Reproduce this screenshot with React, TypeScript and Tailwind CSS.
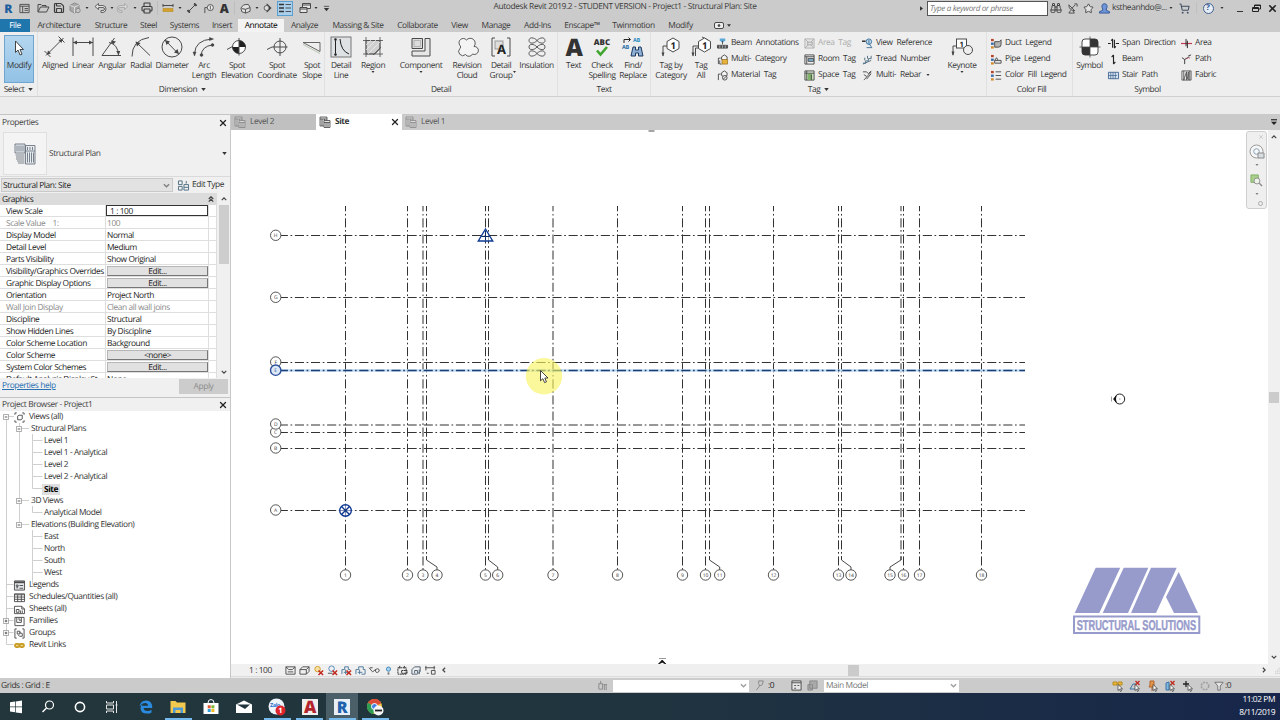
import type { ReactNode } from "react";
import clsx from "clsx";
import { Binoculars, Printer, Save, ShoppingCart, Star, X } from "lucide-react";

type IconProps = { children: ReactNode; className?: string; box?: string };

function Icon({ children, className = "size-3", box = "0 0 12 12" }: IconProps) {
  return (
    <svg
      viewBox={box}
      className={clsx("shrink-0 overflow-visible", className)}
      fill="none"
      stroke="#4a4a4a"
      strokeWidth={1}
    >
      {children}
    </svg>
  );
}

function Caret({ className }: { className?: string }) {
  return (
    <svg viewBox="0 0 6 4" className={clsx("h-[3px] w-[5px] shrink-0", className)}>
      <path d="M0 0h6L3 4z" fill="#333" />
    </svg>
  );
}

/* ---------- title bar ---------- */

function Slot({ w, children }: { w: string; children?: ReactNode }) {
  return <div className={clsx("flex shrink-0 items-center justify-center", w)}>{children}</div>;
}

function QuickAccess() {
  return (
    <div className="flex h-4 w-[334px] shrink-0 items-center">
      <Slot w="w-4">
        <span className="text-[12px] leading-[17px] font-extrabold text-[#1f5f9e]">R</span>
      </Slot>
      <Slot w="w-4">
        <Icon className="size-[11px]">
          <path d="M1 1.500h10v9H1zM1 3.500h10M4 3.500v7M6 6h4M6 8h4" />
        </Icon>
      </Slot>
      <Slot w="w-[19px] pl-[3px]">
        <Icon>
          <path d="M1 10V2.500h3l1 1h4V5M1 10l2.500-5H12L9.500 10z" />
        </Icon>
      </Slot>
      <Slot w="w-4">
        <Save size={12} color="#3c3c3c" strokeWidth={2.4} />
      </Slot>
      <Slot w="w-4">
        <Icon>
          <path d="M1 3.500 5.500 1 10 3v5L5.500 11 1 8.500z" fill="#a9a9a9" stroke="#8a8a8a" />
          <path d="M5.500 5v6M1 3.500 5.500 5 10 3" stroke="#eee" strokeWidth=".7" />
          <circle cx="9" cy="8.500" r="2.200" fill="#c9c9c9" stroke="#8a8a8a" />
        </Icon>
      </Slot>
      <Slot w="w-2">
        <Caret className="h-0.5! w-1!" />
      </Slot>
      <Slot w="w-[17px]">
        <Icon>
          <path d="M4.500 1.500 1 4.500l3.500 3v-2H9q1.500 0 1.500 1.500T9 8.500H7v2h2q3-.5 3-3.500T9 3.500H4.500z" strokeWidth=".8" fill="#e4e4e4" />
        </Icon>
      </Slot>
      <Slot w="w-[7px]">
        <Caret className="h-0.5! w-1!" />
      </Slot>
      <Slot w="w-4">
        <Icon>
          <path d="M7.500 1.500 11 4.500l-3.500 3v-2H3Q1.500 5.500 1.500 7T3 8.500h2v2H3Q0 10 0 7t3-3.500h4.500z" strokeWidth=".7" stroke="#9c9c9c" fill="#d6d6d6" />
        </Icon>
      </Slot>
      <Slot w="w-2">
        <Caret className="h-0.5! w-1!" />
      </Slot>
      <Slot w="w-4">
        <Printer size={12} color="#3c3c3c" strokeWidth={2.2} />
      </Slot>
      <Slot w="w-[5px]">
        <div className="h-3.5 w-px bg-[#bdbdbd]" />
      </Slot>
      <Slot w="w-4">
        <Icon>
          <path d="M1 3.500h10M1 2v3M11 2v3" />
          <path d="M1 6.500h10v3H1z" fill="#d4a22c" stroke="#b98a1c" strokeWidth=".6" />
        </Icon>
      </Slot>
      <Slot w="w-[7px]">
        <Caret className="h-0.5! w-1!" />
      </Slot>
      <Slot w="w-[17px]">
        <Icon>
          <path d="M2.500 9.500l7-7M1 8l3 3M8 1l3 3" />
          <circle cx="2.800" cy="9.200" r="1" fill="#444" />
          <circle cx="9.200" cy="2.800" r="1" fill="#444" />
        </Icon>
      </Slot>
      <Slot w="w-4">
        <Icon className="size-[11px]">
          <circle cx="8" cy="5" r="3.300" fill="#eee" />
          <path d="M4.500 5H2v6M8 3v4" />
        </Icon>
      </Slot>
      <Slot w="w-4">
        <span className="text-[12.500px] leading-[17px] font-extrabold text-[#333]">A</span>
      </Slot>
      <Slot w="w-[5px]">
        <div className="h-3.5 w-px bg-[#bdbdbd]" />
      </Slot>
      <Slot w="w-4">
        <Icon className="size-[11px]">
          <path d="M1 5.500 4 2l5-.5L11 5v4l-5 2-4-1.500zM2 6l4 1 5-2M6 7v4" fill="#e2e2e2" />
        </Icon>
      </Slot>
      <Slot w="w-[7px]">
        <Caret className="h-0.5! w-1!" />
      </Slot>
      <Slot w="w-3.5">
        <Icon className="size-[10px]">
          <path d="M6 1 11 6l-5 5z" fill="#333" />
          <circle cx="5.500" cy="6" r="3" fill="#ddd" />
        </Icon>
      </Slot>
      <div className="ml-[3px] flex h-[15px] w-4 shrink-0 items-center justify-center border border-[#5a9fd0] bg-[#a9cfeb]">
        <Icon>
          <path d="M0 2.500h5M0 6h5M0 9.500h5" strokeWidth="1.500" stroke="#333" />
          <path d="M6.500 2.500H12M6.500 6H12M6.500 9.500H12" strokeWidth=".8" stroke="#333" />
        </Icon>
      </div>
      <Slot w="w-5 pl-1">
        <Icon>
          <path d="M3.500 1.500h8v5h-8zM3.500 3h8" fill="#e6e6e6" />
          <path d="M1 5.500h7v5H1zM1 7h7" fill="#e6e6e6" />
        </Icon>
      </Slot>
      <Slot w="w-1.5">
        <Caret className="h-0.5! w-1!" />
      </Slot>
      <Slot w="w-3.5">
        <Icon className="size-[7px]" box="0 0 8 8">
          <path d="M1 1.500h6" />
          <path d="M1 3.500h6L4 7z" fill="#333" stroke="none" />
        </Icon>
      </Slot>
    </div>
  );
}

function TitleBar() {
  return (
    <header className="flex h-[19px] items-start bg-[#cbcbcb]">
      <QuickAccess />
      <div className="h-[15px] w-[582px] shrink-0 text-center leading-[14px] tracking-[-0.36px] text-[#3c3c3c]">
        Autodesk Revit 2019.2 - STUDENT VERSION - Project1 - Structural Plan: Site
      </div>
      <div className="flex h-4 flex-1 items-center">
        <Slot w="w-[11px]">
          <svg viewBox="0 0 4 6" className="h-[5px] w-[3px]">
            <path d="M0 0v6l4-3z" fill="#333" />
          </svg>
        </Slot>
        <div className="mt-px h-[15px] w-[121px] shrink-0 border border-[#555] bg-white pl-0.5 text-[8px] leading-[13px] tracking-[-0.33px] text-[#777] italic">
          Type a keyword or phrase
        </div>
        <Slot w="w-4">
          <Binoculars size={12} color="#444" strokeWidth={2} />
        </Slot>
        <Slot w="w-4">
          <Icon className="size-[11px]">
            <path d="M2 2q0 6 6.500 6.500zM5 6l4-4M4 8l-2 3h6L6.500 8.500M8 1h3v3" />
          </Icon>
        </Slot>
        <Slot w="w-4">
          <Star size={11} color="#444" strokeWidth={2} fill="#e4e4e4" />
        </Slot>
        <Slot w="w-4">
          <Icon className="size-[11px]">
            <path d="M.5 11V9.500L4 8V6.500Q3 5 3.200 3 4 .7 6 .7T8.800 3Q9 5 8 6.500V8l3.500 1.500V11z" fill="#6f95d8" stroke="#2e5596" />
          </Icon>
        </Slot>
        <span className="w-[55px] shrink-0 whitespace-nowrap text-[#3c3c3c]">kstheanhdo@...</span>
        <Slot w="w-1.5 pl-px">
          <Caret className="h-0.5! w-1!" />
        </Slot>
        <Slot w="w-[23px]">
          <ShoppingCart size={11} color="#3f4d63" strokeWidth={2.2} />
        </Slot>
        <div className="h-3 w-px bg-[#c0c0c0]" />
        <Slot w="w-[22px]">
          <div className="flex size-[11px] items-center justify-center rounded-full border border-[#41608d] bg-[#e7edf5] text-[8px] leading-none font-bold tracking-normal text-[#2f5590]">
            ?
          </div>
        </Slot>
        <Slot w="w-1.5">
          <Caret className="h-0.5! w-1!" />
        </Slot>
        <Slot w="w-6 pl-1.5">
          <div className="mt-[7px] h-[1.500px] w-1.5 bg-[#333]" />
        </Slot>
        <Slot w="w-3.5">
          <Icon className="size-[9px]" box="0 0 9 9">
            <path d="M2.500 3V1h6v4H6.500M.5 3.500h6v4h-6zM.5 4.500h6M2.500 1.500h6" stroke="#222" />
          </Icon>
        </Slot>
        <Slot w="w-[18px]">
          <X size={11} color="#222" strokeWidth={3.5} />
        </Slot>
      </div>
    </header>
  );
}

const RIBBON_TABS = [
  { label: "Architecture", w: "w-[58px]" },
  { label: "Structure", w: "w-[46px]" },
  { label: "Steel", w: "w-[29px]" },
  { label: "Systems", w: "w-[43px]" },
  { label: "Insert", w: "w-8" },
  { label: "Annotate", w: "w-[46px]" },
  { label: "Analyze", w: "w-[41px]" },
  { label: "Massing & Site", w: "w-[66px]" },
  { label: "Collaborate", w: "w-[53px]" },
  { label: "View", w: "w-[31px]" },
  { label: "Manage", w: "w-[42px]" },
  { label: "Add-Ins", w: "w-[41px]" },
  { label: "Enscape™", w: "w-12" },
  { label: "Twinmotion", w: "w-[55px]" },
  { label: "Modify", w: "w-[39px]" },
];

function RibbonTabs() {
  return (
    <nav className="flex h-[13px] bg-[#cbcbcb] text-[#3a3a3a]">
      <div className="w-[30px] bg-[#1f76ad] text-center leading-[14px] text-white">File</div>
      {RIBBON_TABS.map((tab) => (
        <div
          key={tab.label}
          className={clsx(
            "text-center leading-[14px] whitespace-nowrap",
            tab.w,
            tab.label === "Annotate" && "bg-[#f3f3f3] text-black",
          )}
        >
          {tab.label}
        </div>
      ))}
      <div className="flex items-center gap-[3px] pl-3.5">
        <Icon className="h-[7px] w-2.5" box="0 0 10 7">
          <rect x=".5" y=".5" width="9" height="6" rx="1.500" fill="#eee" />
          <circle cx="5" cy="3.500" r=".9" fill="#333" />
        </Icon>
        <Caret className="w-1!" />
      </div>
    </nav>
  );
}

/* ---------- ribbon ---------- */

type ToolProps = { lines: string[]; w: string; drop?: boolean; children: ReactNode };

function Tool({ lines, w, drop, children }: ToolProps) {
  return (
    <div className={clsx("flex shrink-0 flex-col items-center pt-[3px] whitespace-nowrap", w)}>
      <Icon className="mb-px size-6" box="0 0 24 24">
        {children}
      </Icon>
      {lines.map((line) => (
        <span key={line} className="h-[10px] leading-[12px]">
          {line}
        </span>
      ))}
      {drop && <Caret className="mt-px h-0.5! w-1!" />}
    </div>
  );
}

function Panel({ w, title, arrow, children }: { w: string; title: string; arrow?: boolean; children: ReactNode }) {
  return (
    <section className={clsx("flex shrink-0 flex-col border-r border-[#e0e0e0]", w)}>
      <div className="flex h-[51px]">{children}</div>
      <div className="flex h-[13px] items-center justify-center gap-1 leading-[13px]">
        {title}
        {arrow && <Caret />}
      </div>
    </section>
  );
}

type RowItem = { label: string; icon: ReactNode; off?: boolean; drop?: boolean };

function ToolRows({ w, items }: { w: string; items: RowItem[] }) {
  return (
    <div className={clsx("flex shrink-0 flex-col pt-[3px]", w)}>
      {items.map((item) => (
        <div
          key={item.label}
          className={clsx(
            "flex h-4 items-center gap-[3px] leading-4 whitespace-nowrap [word-spacing:2px]",
            item.off && "text-[#acacac]",
          )}
        >
          <Icon className="size-[11px]">{item.icon}</Icon>
          {item.label}
          {item.drop && <Caret className="ml-0.5 h-0.5! w-1!" />}
        </div>
      ))}
    </div>
  );
}

const HEX_TAG = (
  <>
    <path d="M4 11h6M4 11v10" />
    <path d="M2.500 17.500h3L4 21.500z" fill="#444" stroke="none" />
  </>
);

const MINI_TAG = <path d="M1.500 11V4.500H4M8 1l3 2v3l-3 1.500L5 6V3z" fill="#f4f4f4" />;

const TAG_COL_1: RowItem[] = [
  {
    label: "Beam Annotations",
    icon: (
      <>
        <path d="M3 .5h6v2L6 5.500 3 2.500z" fill="#5aa7d8" stroke="none" />
        <path d="M6 3v4" />
        <path d="M.5 8h11v3H.5z" fill="#555" />
        <path d="M3 8v3M6 8v3M9 8v3" stroke="#fff" strokeWidth=".5" />
      </>
    ),
  },
  {
    label: "Multi- Category",
    icon: (
      <>
        {MINI_TAG}
        <path d="M5.500 6h6v5h-6z" fill="#e8b23c" stroke="#8a6412" strokeWidth=".7" />
        <path d="M3 7v4h2" />
      </>
    ),
  },
  {
    label: "Material Tag",
    icon: (
      <>
        {MINI_TAG}
        <circle cx="8.500" cy="8.500" r="2.500" fill="#eee" />
        <path d="M7 10l3-3" />
      </>
    ),
  },
];

const TAG_COL_2: RowItem[] = [
  {
    label: "Area Tag",
    off: true,
    icon: (
      <>
        <path d="M1 1h10v10H1zM1 1l10 10M11 1 1 11" stroke="#b0b0b0" fill="#e4e4e4" />
        <path d="M4 4.500h5v3H4z" stroke="#a6a6a6" fill="#ddd" />
      </>
    ),
  },
  {
    label: "Room Tag",
    icon: (
      <>
        <path d="M1 1h10v10H1zM1 3h10M3 3v8" />
        <path d="M4.500 5h6v3h-6z" fill="#7eb3d5" />
      </>
    ),
  },
  {
    label: "Space Tag",
    icon: (
      <>
        <path d="M1 1h10v10H1z" fill="#d6e7cf" />
        <path d="M4 4h5v7H4z" fill="#7fb46a" stroke="none" />
        <path d="M3 1v10M1 3.500h10M8 5v6" />
      </>
    ),
  },
];

const TAG_COL_3: RowItem[] = [
  {
    label: "View Reference",
    icon: (
      <>
        <path d="M0 3.500h4" stroke="#222" strokeWidth="1.500" />
        <circle cx="7.500" cy="4" r="3" fill="#b9d7ec" stroke="#3d7199" />
        <path d="M5 10.500h6M7.500 2v4l3 4" stroke="#3d7199" />
      </>
    ),
  },
  { label: "Tread Number", icon: <path d="M1 10h3V7.500h3V5h3V2M3 4v3M6 2v3M1 11l9-4" stroke="#4c6a80" /> },
  { label: "Multi- Rebar", drop: true, icon: <path d="M1 2h4l2 2 3-3M3 10l7-8M2 5l3 2M3 10l-1 1M5 10l5-6" /> },
];

const swatches = (
  <>
    <path d="M0 1h3v2.500H0z" fill="#b8432c" stroke="none" />
    <path d="M0 5h3v2.500H0z" fill="#3c6ca8" stroke="none" />
    <path d="M0 9h3v2.500H0z" fill="#d08a2c" stroke="none" />
  </>
);

const LEGENDS: RowItem[] = [
  {
    label: "Duct Legend",
    icon: (
      <>
        {swatches}
        <path d="M4 4h5l2-2v5q0 3-3 3H4z" fill="#b5b5b5" />
      </>
    ),
  },
  {
    label: "Pipe Legend",
    icon: (
      <>
        {swatches}
        <path d="M4 10V7l2-3 2 3h3v3zM4 7h4" fill="#e4e4e4" />
      </>
    ),
  },
  {
    label: "Color Fill Legend",
    icon: (
      <>
        {swatches}
        <path d="M5 2h6M5 6h6M5 10h6" />
      </>
    ),
  },
];

const SYMBOLS_1: RowItem[] = [
  { label: "Span Direction", icon: <path d="M5 1v9.500M7 2v9M5 1 3.500 3M7 11l1.500-2M0 6h3M8.500 6H12" stroke="#222" strokeWidth="1.200" /> },
  { label: "Beam", icon: <path d="M6 1v10M6 1 4 3.500M6 11l2-2.500" stroke="#222" strokeWidth="1.200" /> },
  {
    label: "Stair Path",
    icon: (
      <>
        <path d="M.5 2.500h11v7H.5z" fill="#d5e3f2" stroke="#41658f" />
        <path d="M3 2.500v7M5.500 2.500v7M8 2.500v7M1 6h9" stroke="#41658f" strokeWidth=".8" />
      </>
    ),
  },
];

const SYMBOLS_2: RowItem[] = [
  {
    label: "Area",
    icon: (
      <>
        <path d="M0 6h12" stroke="#c6394f" strokeWidth="1.300" />
        <path d="M5.500 1v8M7 3v8" stroke="#222" />
      </>
    ),
  },
  {
    label: "Path",
    icon: (
      <>
        <path d="M4 11V6L1 4M4 6l5-3M8 2l3-1" stroke="#333" />
        <path d="M5 5l6-1" stroke="#c6394f" strokeDasharray="1 1" />
      </>
    ),
  },
  { label: "Fabric", icon: <path d="M1 1h10v10H1zM3 1v10l3-9v9M8 11V2l-1 8M9.500 1v10" strokeWidth=".9" /> },
];

function Ribbon() {
  return (
    <div className="flex h-[65px] border-b border-[#d0d0d0] bg-[#eeeeee] text-[#383838]">
      <Panel w="w-[38px]" title="Select" arrow>
        <div className="mt-[3px] ml-1 flex h-12 w-[30px] flex-col items-center border border-[#6ea6cf] bg-linear-to-b from-[#b4d6ef] to-[#92c2e6]">
          <Icon className="mt-0.5 size-5" box="0 0 20 20">
            <path d="M6.500 3v11.500L9 12l2 5 2-.8-2-4.700h3.500z" fill="#fff" stroke="#444" />
          </Icon>
          <span className="mt-0.5 leading-[12px]">Modify</span>
        </div>
      </Panel>

      <Panel w="w-[287px] pl-[3px]" title="Dimension" arrow>
        <Tool w="w-7" lines={["Aligned"]}>
          <path d="M3 20.500 20.500 3M1.500 16l6 6M15.500 1.500l6 6" />
          <path d="M4 19.500l1-4 3 3zM19.500 4l-4 1 3 3z" fill="#444" stroke="none" />
        </Tool>
        <Tool w="w-7" lines={["Linear"]}>
          <path d="M2 2.500V21M22 2.500V21M2 7.500h20" />
          <path d="M2 7.500l4-2v4zM22 7.500l-4-2v4z" fill="#444" stroke="none" />
        </Tool>
        <Tool w="w-[30px]" lines={["Angular"]}>
          <path d="M2 20.500h19M2 20.500 14.500 3M9 7.500Q18 9 18.500 20.500" />
          <path d="M11 5.500l5 1-3 3zM18.700 20l-2.500-4h4z" fill="#444" stroke="none" />
        </Tool>
        <Tool w="w-7" lines={["Radial"]}>
          <path d="M3 21.500Q3 5 20 2.500M7 7l14 13.500" />
          <path d="M6.500 6.500l5 1.500-3.500 3.500z" fill="#444" stroke="none" />
        </Tool>
        <Tool w="w-[34px]" lines={["Diameter"]}>
          <circle cx="12" cy="12" r="10" />
          <path d="M5.500 5.500 18 18.500" />
          <path d="M5 5l5 1.500-3.500 3.500zM19 19l-5-1.500 3.500-3.500z" fill="#444" stroke="none" />
        </Tool>
        <Tool w="w-[30px]" lines={["Arc", "Length"]}>
          <path d="M2.500 19Q3 5 20 4M9 20.500Q10 11 20.500 10" />
          <path d="M2.500 21l-1.500-4h3zM21.500 4l-4-1.500v3z" fill="#444" stroke="#444" strokeWidth=".5" />
          <circle cx="9.500" cy="20" r="1.300" fill="#444" />
          <circle cx="20.500" cy="10" r="1.300" fill="#444" />
        </Tool>
        <Tool w="w-9" lines={["Spot", "Elevation"]}>
          <circle cx="14" cy="12" r="6.500" fill="#fff" />
          <path d="M14 5.500V12h6.500A6.500 6.500 0 0 0 14 5.500zM14 18.500V12H7.500A6.500 6.500 0 0 0 14 18.500z" fill="#222" stroke="none" />
          <path d="M2 14.500l5.500-3M14 3v17.500" />
        </Tool>
        <Tool w="w-11" lines={["Spot", "Coordinate"]}>
          <circle cx="15" cy="12" r="6" />
          <path d="M2 14.500 7 12h15.500M15 3v18" />
        </Tool>
        <Tool w="w-[26px]" lines={["Spot", "Slope"]}>
          <path d="M3 7.500h17v9z" stroke="#666" />
          <path d="M3 9.500l17 9" stroke="#b9c8b4" />
        </Tool>
      </Panel>

      <Panel w="w-[233px]" title="Detail">
        <Tool w="w-8" lines={["Detail", "Line"]}>
          <rect x="2" y="2" width="20" height="20" fill="#dfe2e4" stroke="#777" />
          <path d="M6.500 5v14M11 4q1 12 9 15" stroke="#222" />
          <circle cx="6.500" cy="4.500" r="1" fill="#222" />
          <circle cx="6.500" cy="19.500" r="1" fill="#222" />
        </Tool>
        <Tool w="w-8" lines={["Region"]} drop>
          <path d="M5 5.500h14V14l-5 5H5z" fill="#cfcfcf" stroke="#777" />
          <path d="M5 2v20M19 2v20M2 5.500h20M2 19h20M12 20l8-8" strokeWidth=".8" />
          <path d="M5 10l5-5M5 15 15 5M7 19 19 7" stroke="#f2f2f2" strokeWidth=".7" />
        </Tool>
        <div className="w-2 shrink-0" />
        <Tool w="w-12" lines={["Component"]} drop>
          <path d="M3 3.500h10.500v10H3z" fill="#dcdcdc" />
          <path d="M16 3.500h5V21H3v-5h13z" fill="#e6e6e6" />
          <path d="M5 5.500h6.500v6H5z" strokeWidth=".6" stroke="#999" />
        </Tool>
        <Tool w="w-11" lines={["Revision", "Cloud"]}>
          <path
            d="M5 10.500A4 4 0 1 1 11.500 5 4.500 4.500 0 1 1 19 11.500 4 4 0 1 1 17.500 19 4 4 0 0 1 10.500 19.500 4 4 0 1 1 5 13.500Q6.500 12 5 10.500z"
            fill="#f4f4f4"
            strokeWidth=".9"
          />
        </Tool>
        <Tool w="w-6" lines={["Detail", "Group"]}>
          <path d="M6 3H3v18h3M18 3h3v18h-3" />
          <rect x="6" y="6" width="8" height="8" fill="#ddd" stroke="#999" />
          <text x="8" y="18.500" fontSize="13" fontWeight="700" fill="#222" stroke="none">
            A
          </text>
        </Tool>
        <div className="flex w-[3px] items-end pb-2.5">
          <Caret className="h-0.5! w-[3px]!" />
        </div>
        <Tool w="w-[41px]" lines={["Insulation"]}>
          <path
            d="M12 5.500C9 2 4 2 4 5.500S9 9 12 5.500 20 2 20 5.500 15 9 12 5.500zM12 12C9 8.500 4 8.500 4 12s5 3.500 8 0 8-3.500 8 0-5 3.500-8 0zM12 18.500C9 15 4 15 4 18.500s5 3.500 8 0 8-3.500 8 0-5 3.500-8 0z"
            strokeWidth=".9"
          />
        </Tool>
      </Panel>

      <Panel w="w-[93px]" title="Text">
        <Tool w="w-[31px]" lines={["Text"]}>
          <text x="12" y="21" textAnchor="middle" fontSize="24" fontWeight="800" fill="#333" stroke="none">
            A
          </text>
        </Tool>
        <Tool w="w-[26px]" lines={["Check", "Spelling"]}>
          <text x="12" y="10" textAnchor="middle" fontSize="8" fontWeight="800" letterSpacing="0" fill="#333" stroke="none">
            ABC
          </text>
          <path d="M7 15.500l3.500 4L17 12" stroke="#3fa52c" strokeWidth="2.600" />
        </Tool>
        <Tool w="w-9" lines={["Find/", "Replace"]}>
          <text x="1" y="14" fontSize="5.500" fontWeight="700" fill="#2d6fa8" stroke="none">
            AB
          </text>
          <text x="12" y="7" fontSize="5.500" fontWeight="700" fill="#2d8bc0" stroke="none">
            AB
          </text>
          <path d="M3 8V4.500h6M7.500 2.500l2 2-2 2" stroke="#222" />
          <path d="M12 12h2.500v3h3v-3H20l2 9h-4.500v-3h-3v3H10z" fill="#8fb0d6" stroke="#1f3a5f" />
        </Tool>
      </Panel>

      <Panel w="w-[336px]" title="Tag" arrow>
        <Tool w="w-10" lines={["Tag by", "Category"]}>
          {HEX_TAG}
          <path d="M14 3l6 3.500v7L14 17l-6-3.500v-7z" fill="#fff" />
          <text x="14" y="13.500" textAnchor="middle" fontSize="9.500" fontWeight="700" fill="#222" stroke="none">
            1
          </text>
        </Tool>
        <Tool w="w-5" lines={["Tag", "All"]}>
          {HEX_TAG}
          <path d="M6.500 21V13H10M13 2l6 3" />
          <path d="M15.500 3l6 3.500v7l-6 3.500-6-3.500v-7z" fill="#fff" />
          <text x="15.500" y="13.500" textAnchor="middle" fontSize="9.500" fontWeight="700" fill="#222" stroke="none">
            1
          </text>
        </Tool>
        <div className="w-[6px] shrink-0" />
        <ToolRows w="w-[87px]" items={TAG_COL_1} />
        <ToolRows w="w-[58px]" items={TAG_COL_2} />
        <ToolRows w="w-[75px]" items={TAG_COL_3} />
        <div className="mt-[3px] h-12 w-px bg-[#d6d6d6]" />
        <Tool w="w-[50px]" lines={["Keynote"]} drop>
          <path d="M3 11h3M3 11v9" />
          <path d="M1.500 16.500h3L3 21z" fill="#444" stroke="none" />
          <rect x="6.500" y="4" width="10" height="9" fill="#fff" />
          <circle cx="18" cy="15" r="4.500" fill="#eee" />
          <text x="11.500" y="11.500" textAnchor="middle" fontSize="7.500" fontWeight="700" fill="#222" stroke="none">
            1
          </text>
        </Tool>
      </Panel>

      <Panel w="w-[86px] pl-1" title="Color Fill">
        <ToolRows w="w-20" items={LEGENDS} />
      </Panel>

      <section className="flex w-[149px] shrink-0 flex-col">
        <div className="flex h-[51px]">
          <Tool w="w-[33px]" lines={["Symbol"]}>
            <rect x="4" y="4" width="16" height="16" rx="3" fill="#fff" />
            <path d="M12 4h5q3 0 3 3v5h-8zM4 12h8v8H7q-3 0-3-3z" fill="#333" stroke="none" />
            <path d="M12 1.500v21M1.500 12h21" strokeWidth=".8" />
          </Tool>
          <div className="w-0.5" />
          <ToolRows w="w-[73px]" items={SYMBOLS_1} />
          <ToolRows w="w-10" items={SYMBOLS_2} />
        </div>
        <div className="h-[13px] text-center leading-[13px]">Symbol</div>
      </section>
    </div>
  );
}

/* ---------- properties ---------- */

function PanelTitle({ children }: { children: ReactNode }) {
  return (
    <div className="flex items-center justify-between bg-[#f0f0f0] pr-0.5 pl-0.5 text-[#444]">
      <span>{children}</span>
      <X size={10} color="#222" strokeWidth={3} />
    </div>
  );
}

type Prop = { name: string; value: string; kind?: "edit" | "off" | "focus" };

const PROPS: Prop[] = [
  { name: "View Scale", value: "1 : 100", kind: "focus" },
  { name: "Scale Value    1:", value: "100", kind: "off" },
  { name: "Display Model", value: "Normal" },
  { name: "Detail Level", value: "Medium" },
  { name: "Parts Visibility", value: "Show Original" },
  { name: "Visibility/Graphics Overrides", value: "Edit...", kind: "edit" },
  { name: "Graphic Display Options", value: "Edit...", kind: "edit" },
  { name: "Orientation", value: "Project North" },
  { name: "Wall Join Display", value: "Clean all wall joins", kind: "off" },
  { name: "Discipline", value: "Structural" },
  { name: "Show Hidden Lines", value: "By Discipline" },
  { name: "Color Scheme Location", value: "Background" },
  { name: "Color Scheme", value: "<none>", kind: "edit" },
  { name: "System Color Schemes", value: "Edit...", kind: "edit" },
  { name: "Default Analysis Display St...", value: "None" },
];

function PropertyRow({ prop }: { prop: Prop }) {
  return (
    <div
      className={clsx(
        "flex h-3 border-b border-[#dedede] leading-[13px] whitespace-pre",
        prop.kind === "off" ? "text-[#8a8a8a]" : "text-[#1c1c1c]",
      )}
    >
      <div className="h-[13px] w-[105px] shrink-0 pl-1.5">{prop.name}</div>
      <div className="h-[13px] w-[104px] shrink-0 border-x border-[#dedede]">
        {prop.kind === "edit" && (
          <div className="mt-px ml-px h-[10px] border border-[#b5b5b5] border-b-[#777] border-r-[#777] bg-[#e1e1e1] text-center leading-[10px]">
            {prop.value}
          </div>
        )}
        {prop.kind === "focus" && (
          <div className="h-[11px] border border-[#333] bg-white pl-[3px] leading-[11px]">{prop.value}</div>
        )}
        {prop.kind !== "edit" && prop.kind !== "focus" && <span className="pl-px">{prop.value}</span>}
      </div>
      <div className="w-2 border-r border-[#dedede]" />
    </div>
  );
}

function Chevron({ d, className }: { d: string; className?: string }) {
  return (
    <svg viewBox="0 0 8 8" className={clsx("size-[7px] shrink-0", className)} fill="none" stroke="#444" strokeWidth="1.600">
      <path d={d} />
    </svg>
  );
}

function Properties() {
  return (
    <div className="flex h-[284px] flex-col border-b border-[#c4c4c4] bg-[#f0f0f0]">
      <div className="grid h-[17px] shrink-0 border-t border-[#c4c4c4]">
        <PanelTitle>Properties</PanelTitle>
      </div>
      <div className="flex h-[46px] shrink-0 items-center border-b border-[#dadada]">
        <div className="ml-[3px] flex h-[43px] w-11 items-center justify-center border border-[#dfdfdf] bg-[#f4f4f4]">
          <svg viewBox="0 0 22 22" className="size-[22px]" fill="none" stroke="#5c6672" strokeWidth=".8">
            <path d="M1 1h10v9H1zM11.500 2.500h9.500v18.500h-9.500z" fill="#e6ebf0" />
            <path d="M3 2.500v6M5 2.500v6M7 2.500v6M9 2.500v6M11.500 8h9.500M13.500 9.500v10M15.500 9.500v10M17.500 9.500v10M19.500 9.500v10M13.500 4v3M16 4v3M18.500 4v3" />
            <path d="M1.500 12h9M2 14h8.500M2 16h8.500M3 18h7.500M4 20h6.500" />
          </svg>
        </div>
        <span className="flex-1 pl-0.5 text-[#444]">Structural Plan</span>
        <Caret className="mr-[3px]" />
      </div>
      <div className="flex h-4 shrink-0 items-center">
        <div className="ml-px flex h-[14px] w-[172px] items-center justify-between border border-[#c9c9c9] bg-[#e2e2e2] pr-0.5 pl-px leading-[13px] text-[#222]">
          Structural Plan: Site
          <Chevron d="M1 2.500l3 3 3-3" className="opacity-60" />
        </div>
        <Icon className="mr-[3px] ml-[5px] size-[11px]">
          <path d="M.5 1h4v4h-4zM.5 7h4v4h-4zM6.500 5h5v6h-5zM6.500 8h5M9 1v3" stroke="#4a6a80" />
        </Icon>
        <span className="text-[#333]">Edit Type</span>
      </div>
      <div className="flex min-h-0 flex-1">
        <div className="flex w-[217px] flex-col overflow-hidden bg-white">
          <div className="flex h-3 shrink-0 items-center justify-between bg-[#dcdcdc] pr-[3px] pl-0.5 leading-[13px] text-[#222]">
            Graphics
            <Chevron d="M1 4l3-3 3 3M1 7.500l3-3 3 3" className="size-[6px]!" />
          </div>
          <div className="h-[173px] shrink-0 overflow-hidden">
            {PROPS.map((p) => (
              <PropertyRow key={p.name} prop={p} />
            ))}
          </div>
        </div>
        <div className="flex h-[185px] w-[13px] flex-col items-center justify-between bg-[#f0f0f0] py-[3px]">
          <Chevron d="M1 5.500l3-3 3 3" className="size-[6px]!" />
          <div className="-mt-[103px] h-[59px] w-[10px] bg-[#cdcdcd]" />
          <Chevron d="M1 2.500l3 3 3-3" className="size-[6px]!" />
        </div>
      </div>
      <div className="flex h-[19px] shrink-0 items-start justify-between pt-px pr-0.5 pl-0.5">
        <span className="leading-[14px] text-[#2a6fb0] underline">Properties help</span>
        <div className="h-[15px] w-[49px] bg-[#cccccc] text-center leading-[15px] text-[#8b8b8b]">Apply</div>
      </div>
    </div>
  );
}

/* ---------- project browser ---------- */

type TreeItem = { label: string; level: number; box?: "+" | "-"; icon?: ReactNode; active?: boolean };

const TREE: TreeItem[] = [
  {
    label: "Views (all)",
    level: 0,
    box: "-",
    icon: <path d="M3 1H1v2M9 1h2v2M3 11H1V9M9 11h2V9M4 4.500l1.500-1H9v4L7.500 8.500H4z" />,
  },
  { label: "Structural Plans", level: 1, box: "-" },
  { label: "Level 1", level: 2 },
  { label: "Level 1 - Analytical", level: 2 },
  { label: "Level 2", level: 2 },
  { label: "Level 2 - Analytical", level: 2 },
  { label: "Site", level: 2, active: true },
  { label: "3D Views", level: 1, box: "-" },
  { label: "Analytical Model", level: 2 },
  { label: "Elevations (Building Elevation)", level: 1, box: "-" },
  { label: "East", level: 2 },
  { label: "North", level: 2 },
  { label: "South", level: 2 },
  { label: "West", level: 2 },
  {
    label: "Legends",
    level: 0,
    icon: (
      <>
        <path d="M.5 1h11v10H.5z" fill="#e3e6ea" />
        <path d="M.5 2.500h11" strokeWidth="2" />
        <path d="M2.500 5.500h2v1.500h-2zM2.500 8.500h2M6 6h4M6 9h4" />
      </>
    ),
  },
  { label: "Schedules/Quantities (all)", level: 0, icon: <path d="M.5 2h11v8.500H.5zM.5 3h11M.5 5.500h11M.5 8h11M4 3v7.500M8 3v7.500" /> },
  { label: "Sheets (all)", level: 0, icon: <path d="M.5 2.500h8l3 3v5H.5zM8.500 2.500v3h3M2.500 6h3v3h-3zM7 7v3M9 7v3" /> },
  { label: "Families", level: 0, box: "+", icon: <path d="M1 1.500h10v9H1zM3 1.500V7h5V1.500M5.500 1.500v3H8" /> },
  {
    label: "Groups",
    level: 0,
    box: "+",
    icon: <path d="M3 1H1v10h2M9 1h2v10H9M3.500 3.500h3v3h-3zM6 5l3 1v3H6L4.500 7.500" />,
  },
  {
    label: "Revit Links",
    level: 0,
    icon: (
      <>
        <rect x="1" y="4.200" width="5" height="3.600" rx="1.800" stroke="#c79a1e" strokeWidth="1.800" fill="#e9d48c" />
        <rect x="6" y="4.200" width="5" height="3.600" rx="1.800" stroke="#c79a1e" strokeWidth="1.800" fill="#e9d48c" />
      </>
    ),
  },
];

function TreeRow({ node }: { node: TreeItem }) {
  return (
    <div className="flex h-3 items-center leading-[12px] whitespace-nowrap text-[#333]">
      <div
        className={clsx(
          "flex shrink-0 items-center justify-end",
          node.level === 0 && "w-[9px]",
          node.level === 1 && "w-[22px]",
          node.level === 2 && "w-[42px]",
        )}
      >
        {node.box && (
          <svg viewBox="0 0 7 7" className="size-[6px]">
            <path d="M.5.5h6v6h-6z" fill="#fff" stroke="#9a9a9a" />
            <path d={node.box === "+" ? "M2 3.500h3M3.500 2v3" : "M2 3.500h3"} stroke="#444" />
          </svg>
        )}
      </div>
      {node.level === 0 && <Icon className="mr-1 ml-[5px] size-[11px]">{node.icon}</Icon>}
      <span
        className={clsx(
          node.level === 1 && "pl-[9px]",
          node.level === 2 && "px-0.5",
          node.active && "bg-[#dedede] leading-[11px] font-bold tracking-[-0.45px] text-black",
        )}
      >
        {node.label}
      </span>
    </div>
  );
}

function ProjectBrowser() {
  return (
    <div className="flex flex-1 flex-col bg-white">
      <div className="grid h-[13px] shrink-0">
        <PanelTitle>Project Browser - Project1</PanelTitle>
      </div>
      <div className="relative">
        <svg viewBox="0 0 60 240" className="absolute top-0 left-0 h-60 w-[60px]" stroke="#cfcfcf" strokeWidth="1" fill="none">
          <path d="M6.500 8v225.500M6.500 173.500h7M6.500 185.500h7M6.500 197.500h7M6.500 209.500h7M6.500 221.500h7M6.500 233.500h7M9 5.500h5" />
          <path d="M19.500 12v101M22 17.500h7M22 89.500h7M22 113.500h7" />
          <path d="M32.500 23v54.500M32.500 29.500h10M32.500 41.500h10M32.500 53.500h10M32.500 65.500h10M32.500 77.500h10" />
          <path d="M32.500 95v6.500h10M32.500 119v54.500M32.500 125.500h10M32.500 137.500h10M32.500 149.500h10M32.500 161.500h10" />
        </svg>
        <div className="relative">
          {TREE.map((n) => (
            <TreeRow key={n.label} node={n} />
          ))}
        </div>
      </div>
    </div>
  );
}

/* ---------- drawing area ---------- */

const TABS = [
  { label: "Level 2", w: "w-[85px]", tone: "bg-[#c0c0c0] text-[#555]" },
  { label: "Site", w: "w-[86px]", tone: "bg-white font-bold text-[#333]", open: true },
  { label: "Level 1", w: "w-20", tone: "text-[#555]" },
];

function ViewTabs() {
  return (
    <div className="flex h-4 shrink-0 bg-[#cacaca]">
      {TABS.map((tab) => (
        <div key={tab.label} className={clsx("flex items-center pl-[3px]", tab.w, tab.tone)}>
          <Icon className={clsx("mr-1 size-3", !tab.open && "opacity-50")}>
            <path d="M1 1h7v9H1zM1 3h7M3 3v7M5.500 3v7" fill="#ddd" strokeWidth=".8" />
            <path d="M5 4.500h6v7H5zM5 6.500h6M7 6.500v5M9 6.500v5" fill="#e6e6e6" strokeWidth=".8" />
          </Icon>
          <span className="flex-1">{tab.label}</span>
          {tab.open && <X size={10} color="#222" strokeWidth={3} className="mr-0.5" />}
        </div>
      ))}
      <div className="flex flex-1 items-center justify-end pr-[3px]">
        <Icon className="size-[6px]" box="0 0 8 8">
          <path d="M0 1h8" stroke="#222" strokeWidth="1.500" />
          <path d="M0 3.500h8L4 8z" fill="#222" stroke="none" />
        </Icon>
      </div>
    </div>
  );
}

const ROWS = [
  { name: "H", y: 235.5, by: 235.3 },
  { name: "G", y: 297.5, by: 297.3 },
  { name: "F", y: 362.5, by: 362 },
  { name: "C", y: 432.5, by: 432 },
  { name: "D", y: 425, by: 424, soft: true },
  { name: "B", y: 448.5, by: 448 },
  { name: "A", y: 510.5, by: 510 },
];

const COLS = [
  { x: 345.5 },
  { x: 407.5 },
  { x: 423, soft: true },
  { x: 426.5, to: 437 },
  { x: 485.5 },
  { x: 488.5, to: 497.7 },
  { x: 553, soft: true },
  { x: 617.5 },
  { x: 682.5 },
  { x: 705.5 },
  { x: 709.5, to: 719.7 },
  { x: 773.5 },
  { x: 838.5 },
  { x: 841.5, to: 851 },
  { x: 901, to: 890, soft: true },
  { x: 903.5 },
  { x: 919.5 },
  { x: 981.5 },
];

const DASH = "9.1 2.600 1.700 2.700";

function Bubble({ x, y, label, blue }: { x: number; y: number; label: string; blue?: boolean }) {
  return (
    <g>
      <circle
        cx={x}
        cy={y}
        r="5.200"
        fill={blue ? "#dde9f8" : "#fff"}
        stroke={blue ? "#2a4f9a" : "#444"}
        strokeWidth={blue ? 1.4 : 0.9}
      />
      <text x={x} y={y + 1.8} textAnchor="middle" fontSize="5" letterSpacing="0" fill={blue ? "#1c3f86" : "#333"}>
        {label}
      </text>
    </g>
  );
}

function Drawing() {
  return (
    <svg viewBox="231 130 1037 534" className="h-[534px] w-[1037px] shrink-0 bg-white">
      <g fill="none" stroke="#333" strokeDasharray={DASH}>
        {ROWS.map((r) => (
          <path
            key={r.name}
            d={`M281 ${r.y}H1025`}
            strokeDashoffset="2.200"
            stroke={r.soft ? "#979797" : undefined}
            strokeWidth={r.soft ? 2 : 1}
          />
        ))}
        {COLS.map((c) => (
          <path
            key={c.x}
            d={`M${c.x} 206V${c.to ? 560 : 570}`}
            strokeDashoffset="3.800"
            stroke={c.soft ? "#979797" : undefined}
            strokeWidth={c.soft ? 2 : 1}
          />
        ))}
      </g>
      {COLS.map((c, i) => (
        <g key={c.x}>
          {c.to && <path d={`M${c.x} 556V560L${c.to} 567V570`} fill="none" stroke="#333" strokeWidth=".9" />}
          <Bubble x={c.to ?? c.x} y={575} label={String(i + 1)} />
        </g>
      ))}
      {ROWS.map((r) => (
        <Bubble key={r.name} x={275.7} y={r.by} label={r.name} />
      ))}

      <path d="M281 370.500H1025" stroke="#c3def3" strokeWidth="2.500" />
      <path d="M281 370.500H1025" stroke="#1b3d75" strokeWidth="1.500" strokeDasharray={DASH} strokeDashoffset="2.200" />
      <Bubble x={275.7} y={370.2} label="E" blue />

      <path d="M485.500 229l7.200 12h-14.400z" fill="#fff" fillOpacity=".6" stroke="#0f3a94" strokeWidth="1.400" />
      <path d="M485.500 231v9M481.500 236.500h8" stroke="#0f2a64" strokeWidth="1" />
      <g fill="none" stroke="#0f3a94" strokeWidth="1.400">
        <circle cx="345.500" cy="510.500" r="5.800" fill="#fff" />
        <path d="M341.500 506.500l8 8M349.500 506.500l-8 8" />
      </g>
      <path d="M345.500 505v11M340 510.500h11" stroke="#0f2a64" strokeWidth=".5" />

      <circle cx="544" cy="376.300" r="18.200" fill="#f7f45c" fillOpacity=".62" />
      <path d="M540.500 370.500v10.300l2.400-2.100 1.700 3.900 1.900-.8-1.700-3.800h3.200z" fill="#fff" stroke="#333" strokeWidth=".9" />

      <circle cx="1119.700" cy="399" r="5" fill="#fff" stroke="#222" />
      <path d="M1117.500 394.500q-3 4.500 0 9l-4.500-4.500z" fill="#111" />
      <path d="M1119 399h1.500M1111.500 396.500v5" stroke="#888" strokeWidth=".8" />
      <path d="M648.500 131h6" stroke="#888" strokeWidth="1.500" />
      <path d="M659 658.500h7" stroke="#999" strokeWidth="1" />
      <path d="M658.500 664l3.700-4 3.700 4-3.700-1.700z" fill="#111" stroke="#111" strokeWidth=".8" />

      <g fill="#979bcb">
        <path d="M1095.700 567.700h24.500L1099.300 613h-24.600zM1123.700 567.700h24.600L1128 613h-25.300zM1151 567.700h25.700L1156 613h-25zM1178.700 572 1198 613h-24l-8-16z" />
        <path fillRule="evenodd" d="M1073 615.600h127.300v18.300H1073zM1075 617.600v14.300h123.300v-14.300z" />
        <text
          x="1076.700"
          y="629.800"
          textLength="119.500"
          lengthAdjust="spacingAndGlyphs"
          fontSize="14.200"
          fontWeight="700"
          letterSpacing="0"
          stroke="#979bcb"
          strokeWidth=".4"
          fontFamily="Liberation Sans, Arial, sans-serif"
        >
          STRUCTURAL SOLUTIONS
        </text>
      </g>
    </svg>
  );
}

function NavBar() {
  return (
    <div className="absolute top-[17px] right-[13px] flex h-[78px] w-[21px] flex-col items-center rounded-[3px] border border-[#cfcfcf] bg-[#efefef]">
      <X size={6} color="#aaa" className="mt-0.5 ml-2" />
      <Icon className="mt-1 size-4" box="0 0 16 16">
        <circle cx="7.500" cy="7.500" r="6.500" fill="#f6f6f6" stroke="#9b9b9b" />
        <circle cx="7.500" cy="7.500" r="2.800" stroke="#8aa3b8" />
        <path d="M9 9h6v5H9z" fill="#d8dde2" stroke="#8c8c8c" />
      </Icon>
      <Caret className="mt-1 h-0.5! w-1! opacity-60" />
      <Icon className="mt-2 size-[13px]" box="0 0 14 14">
        <path d="M1 1h8v8H1z" fill="#a9cf8c" stroke="#7fae62" />
        <circle cx="7.500" cy="7.500" r="3.200" fill="#eef4ea" stroke="#8d8d8d" />
        <path d="M10 10l3 3" stroke="#8d8d8d" strokeWidth="1.500" />
      </Icon>
      <Caret className="mt-1.5 h-0.5! w-1! opacity-60" />
      <div className="mt-1.5 ml-2 size-[5px] rounded-full border border-[#aaa]" />
    </div>
  );
}

const VIEW_ICONS: ReactNode[] = [
  <path d="M1 2h10v8H1zM1 2l3 3h4l3-3M3 7.500h6" />,
  <path d="M1 5h7v5H1zM1 5l3-3h7L8 5M11 2v5l-3 3" />,
  <>
    <circle cx="5" cy="4.500" r="3" stroke="#d19a2a" fill="#f6e2a4" />
    <path d="M6 6l5 5M11 6l-5 5" stroke="#c0281c" strokeWidth="1.600" />
  </>,
  <>
    <circle cx="5" cy="4" r="3" stroke="#4a86b5" />
    <path d="M1 9h5" />
    <path d="M6 6l5 5M11 6l-5 5" stroke="#c0281c" strokeWidth="1.600" />
  </>,
  <>
    <path d="M1 10V5h3V2h4v3h2M3 8h5M5 5v5" stroke="#4a7699" />
    <path d="M6 6l5 5M11 6l-5 5" stroke="#c0281c" strokeWidth="1.600" />
  </>,
  <path d="M1 10V5h3V2h5v3h2v5H7M3 8h5M5 5v5" stroke="#4a7699" />,
  <path d="M0 3l4 4.500 3-2.500q3-2 4 0t-1.500 3T7 5M1 3h3" />,
  <>
    <circle cx="6" cy="4.500" r="2.300" fill="#a8d5f2" stroke="#3f86b8" />
    <path d="M5 8h2v2.500H5z" fill="#777" stroke="none" />
  </>,
  <path d="M1 3h9v7H1zM3 1v3M8 1v3M5 6h6v3H5z" stroke="#222" strokeDasharray="2 .6" />,
  <path d="M1 5l3-3h6v5l-3 3H1zM4 9V6h3v3M9 5v5" stroke="#47596b" />,
  <path d="M0 3h11M1 1v5M10 1v4M2 9h2M7 6h4v4H7z" />,
];

function ViewBar() {
  return (
    <div className="flex h-[13px] shrink-0 items-center border-b border-[#dcdcdc] bg-[#f0f0f0]">
      <span className="w-[52px] shrink-0 pl-[18px] leading-[13px] text-[#333]">1 : 100</span>
      {VIEW_ICONS.map((icon, i) => (
        <Slot key={i} w="w-[14px]">
          <Icon className="size-[11px]">{icon}</Icon>
        </Slot>
      ))}
      <Slot w="w-[13px]">
        <Chevron d="M5.500 1l-3 3 3 3" className="size-[6px]!" />
      </Slot>
      <div className="flex h-[11px] flex-1 items-center bg-[#efefef] pl-[398px]">
        <div className="h-[11px] w-[11px] bg-[#cbcbcb]" />
      </div>
      <Slot w="w-4">
        <Chevron d="M2.500 1l3 3-3 3" className="size-[6px]!" />
      </Slot>
      <Slot w="w-2">
        <svg viewBox="0 0 8 8" className="size-[7px]" stroke="#bbb">
          <path d="M7 1v7M5 3v5M3 5v3" strokeDasharray="1 1" />
        </svg>
      </Slot>
    </div>
  );
}

function Workspace() {
  return (
    <main className="relative flex min-w-0 flex-1 flex-col">
      <ViewTabs />
      <div className="flex h-[534px] shrink-0">
        <Drawing />
        <div className="flex flex-1 flex-col items-center justify-between bg-[#f0f0f0] py-1">
          <Chevron d="M1 5.500l3-3 3 3" className="size-[6px]!" />
          <div className="h-[11px] w-[10px] bg-[#cbcbcb]" />
          <Chevron d="M1 2.500l3 3 3-3" className="size-[6px]!" />
        </div>
      </div>
      <ViewBar />
      <NavBar />
    </main>
  );
}

/* ---------- status bar and taskbar ---------- */

const cursor = <path d="M6 4.500v6l1.500-1.300 1 2.300 1-.5-1-2.200h2z" fill="#fff" stroke="#333" strokeWidth=".7" />;

const SELECT_ICONS: ReactNode[] = [
  <>
    <path d="M1 2h4v3H1zM6 2h4v3H6z" fill="#e8b93a" stroke="#b98a1c" />
    {cursor}
  </>,
  <>
    <path d="M1 9l3-5h3M1 9h5" stroke="#3a74a8" />
    <path d="M6.500 1l4 4M10.500 1l-4 4" stroke="#c0281c" strokeWidth="1.300" />
    {cursor}
  </>,
  <>
    <path d="M3 1h4v4l1 2H2l1-2zM5 7v4" fill="#e0954a" stroke="#b5652a" />
    {cursor}
  </>,
  <>
    <path d="M2 3l3-1v8H2z" fill="#7fb7de" stroke="#3a74a8" />
    <path d="M6.500 1l4 4M10.500 1l-4 4" stroke="#c0281c" strokeWidth="1.300" />
    {cursor}
  </>,
  <>
    <path d="M4 1v6M1 4h6" stroke="#222" strokeWidth="1.300" />
    {cursor}
  </>,
  <circle cx="6" cy="6" r="3.700" stroke="#a0a0a0" strokeWidth="1.600" strokeDasharray="2 1" />,
];

function StatusBar() {
  return (
    <div className="flex h-[15px] shrink-0 items-center bg-[#cbcbcb] text-[#333]">
      <span className="w-[595px] shrink-0 pl-px leading-[14px]">Grids : Grid : E</span>
      <Slot w="w-[18px] pr-1">
        <Icon className="size-[11px]">
          <path d="M2 4h4v6H2zM4 1v3M8 11V5M10 11V5M7 5h4" stroke="#888" />
        </Icon>
      </Slot>
      <div className="flex h-3 w-[136px] shrink-0 items-center justify-end bg-white pr-0.5">
        <Chevron d="M1 2.500l3 3 3-3" className="opacity-50" />
      </div>
      <Slot w="w-[19px] pl-1">
        <Icon className="size-[11px]">
          <path d="M4 1h5L8 5 5 6.500 4 4zM5 6.500 1.500 11" stroke="#888" />
        </Icon>
      </Slot>
      <span className="w-[22px] shrink-0 text-[#222]">:0</span>
      <Slot w="w-3">
        <Icon className="size-[11px]">
          <path d="M1 1h10v10H1zM1 3h10" fill="#e6e6e6" />
          <path d="M3.500 6h2M7 6h2M3.500 9h2" />
        </Icon>
      </Slot>
      <Slot w="w-5">
        <Icon className="size-[11px]">
          <path d="M3 1h8v8H3zM1 5h5v6H1z" fill="#aaa" stroke="#888" />
        </Icon>
      </Slot>
      <div className="ml-0.5 flex h-3 w-[135px] shrink-0 items-center justify-between bg-white pr-0.5 pl-0.5 text-[#777]">
        Main Model
        <Chevron d="M1 2.500l3 3 3-3" className="opacity-50" />
      </div>
      <div className="flex flex-1 items-center gap-[5.400px] pl-[153px]">
        {SELECT_ICONS.map((icon, i) => (
          <Icon key={i} className="size-3">
            {icon}
          </Icon>
        ))}
      </div>
      <div className="flex w-[66px] shrink-0 items-center gap-px">
        <Icon className="size-[10px]">
          <path d="M1 1.500h10L7.500 6v5h-3V6z" stroke="#666" fill="#e4e4e4" />
        </Icon>
        :0
      </div>
    </div>
  );
}

type Task = { w: string; on?: boolean; active?: boolean; icon: ReactNode };

const TASKS: Task[] = [
  { w: "w-8", icon: <path d="M4 5.300l5-.7v5H4zM9.700 4.500 16 3.600v6H9.700zM4 10.300h5v5l-5-.7zM9.700 10.300H16v6l-6.300-.9z" fill="#fff" stroke="none" /> },
  {
    w: "w-8",
    icon: (
      <>
        <circle cx="11.500" cy="8" r="4" stroke="#fff" strokeWidth="1.200" />
        <path d="M8.500 11 4.500 15" stroke="#fff" strokeWidth="1.400" />
      </>
    ),
  },
  { w: "w-8", icon: <circle cx="10" cy="10" r="4.600" stroke="#fff" strokeWidth="1.600" /> },
  { w: "w-8", icon: <path d="M4.500 4v2h7V4M4.500 16v-2h7v2M4.500 8h7v4h-7zM14.500 4v12M13.500 8h2" stroke="#e8e8e8" /> },
  {
    w: "w-9",
    icon: <path d="M3.500 9.500Q4.500 3.500 10.300 3.500q6 0 6 7.500H7.500q.3 3 4 3 2.500 0 4-1.200v2.600q-1.800 1.200-4.500 1.200-6.500 0-6.500-5.600 0-2.600 2.500-4.200-1 1-1 2h6q0-2.700-3-2.700-3 0-5.500 3.400z" fill="#2a8be0" stroke="none" />,
  },
  {
    w: "w-7",
    on: true,
    icon: (
      <>
        <path d="M2.500 4h5l1.500 1.500h8.500V16h-15z" fill="#f2c94f" stroke="none" />
        <path d="M5 10.500h10V16h-2.500v-3h-5v3H5z" fill="#4e9ad6" stroke="none" />
      </>
    ),
  },
  {
    w: "w-[38px]",
    icon: (
      <>
        <path d="M2.500 6h15v11h-15z" fill="#fff" stroke="none" />
        <path d="M7 6q0-3.500 3-3.500T13 6" stroke="#fff" />
        <path d="M6.700 8.300h3v3h-3z" fill="#e4572e" stroke="none" />
        <path d="M10.400 8.300h3v3h-3z" fill="#7cb82f" stroke="none" />
        <path d="M6.700 12h3v3h-3z" fill="#2f9fe0" stroke="none" />
        <path d="M10.400 12h3v3h-3z" fill="#f5b921" stroke="none" />
      </>
    ),
  },
  {
    w: "w-7",
    icon: (
      <>
        <path d="M2 7.500 10 3.500l8 4V16H2z" fill="#fff" stroke="none" />
        <path d="M3 7.500h13l-5 4.500z" fill="#22353c" stroke="none" />
      </>
    ),
  },
  {
    w: "w-[38px]",
    on: true,
    icon: (
      <>
        <circle cx="9.500" cy="9.500" r="8" fill="#eef4fb" stroke="none" />
        <text x="8" y="9.500" textAnchor="middle" fontSize="5.500" fontWeight="700" fill="#2a6fd0" stroke="none">
          Zalo
        </text>
        <circle cx="13.500" cy="13.500" r="5" fill="#e0242b" stroke="none" />
        <text x="13.500" y="16.300" textAnchor="middle" fontSize="7.500" fontWeight="700" letterSpacing="0" fill="#fff" stroke="none">
          1
        </text>
      </>
    ),
  },
  {
    w: "w-[27px]",
    on: true,
    icon: (
      <>
        <path d="M2 2h16v16H2z" fill="#f1eeee" stroke="none" />
        <text x="10" y="16" textAnchor="middle" fontSize="17" fontWeight="800" fill="#b3242c" stroke="none">
          A
        </text>
      </>
    ),
  },
  {
    w: "w-8 mx-[3px]",
    on: true,
    active: true,
    icon: (
      <>
        <path d="M2 2h16v16H2z" fill="#e9eff6" stroke="none" />
        <text x="10" y="15.800" textAnchor="middle" fontSize="16" fontWeight="800" fill="#1d62ad" stroke="none">
          R
        </text>
      </>
    ),
  },
  {
    w: "w-7",
    on: true,
    icon: (
      <>
        <circle cx="9.500" cy="9.500" r="7.500" fill="#f1c232" stroke="none" />
        <path d="M9.500 9.500 3 5.700a7.500 7.500 0 0 1 13.300.6z" fill="#dd4b39" stroke="none" />
        <path d="M9.500 9.500 8.500 17A7.500 7.500 0 0 1 3 5.700z" fill="#2f9e55" stroke="none" />
        <circle cx="9.500" cy="9.500" r="3" fill="#3f82e4" stroke="#fff" />
        <circle cx="13.500" cy="13.500" r="5" fill="#f5f5f5" stroke="none" />
        <path d="M10 13.500h7" stroke="#222" strokeWidth="1.800" />
      </>
    ),
  },
];

function Taskbar() {
  return (
    <footer className="flex h-[27px] shrink-0 bg-linear-to-r from-[#22363b] via-[#20343f] to-[#17264a]">
      {TASKS.map((task, i) => (
        <div
          key={i}
          className={clsx(
            "flex shrink-0 flex-col items-center justify-between pt-1",
            task.w,
            task.active && "bg-[#4b5f69]",
          )}
        >
          <Icon className="size-5" box="0 0 20 20">
            {task.icon}
          </Icon>
          {task.on && <div className="h-0.5 w-[27px] bg-[#76b9ed]" />}
        </div>
      ))}
      <div className="flex-1" />
      <div className="flex w-12 flex-col pt-px pr-[5px] text-right leading-[12.500px] tracking-[-0.44px] whitespace-nowrap text-white">
        <span>11:02 PM</span>
        <span>8/11/2019</span>
      </div>
    </footer>
  );
}

export default function App() {
  return (
    <div className="flex h-[720px] w-[1280px] flex-col overflow-hidden bg-[#ececec] font-['Open_Sans','Noto_Sans',sans-serif] text-[8.400px] leading-[12px] tracking-[-0.410px] [text-rendering:geometricPrecision]">
      <TitleBar />
      <RibbonTabs />
      <Ribbon />
      <div className="h-[17px] shrink-0 bg-[#ececec]" />
      <div className="flex h-[564px] shrink-0">
        <aside className="flex w-[231px] shrink-0 flex-col border-r border-[#c8c8c8]">
          <Properties />
          <ProjectBrowser />
        </aside>
        <Workspace />
      </div>
      <StatusBar />
      <Taskbar />
    </div>
  );
}
